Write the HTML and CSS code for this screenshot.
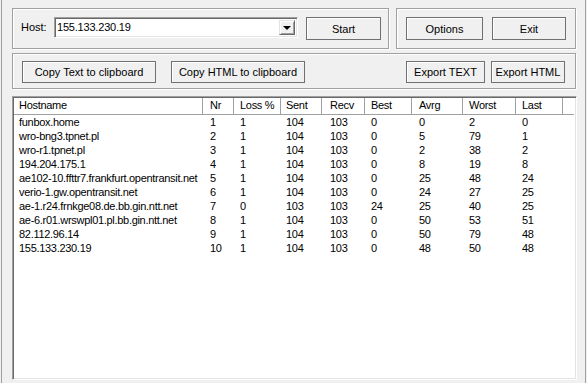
FILE: index.html
```html
<!DOCTYPE html>
<html lang="en">
<head>
<meta charset="UTF-8" />
<title>WinMTR</title>
<link rel="stylesheet" href="styles.css">
</head>
<body>
<div class="fila">
    <div class="grupo grupoHost">
        <span class="rotulo">Host:</span>
        <div class="combo">
            <span class="comboTexto">155.133.230.19</span>
            <span class="comboSeta"><i></i></span>
        </div>
        <div class="botao btnStart">Start</div>
    </div>
    <div class="grupo grupoOpcoes">
        <div class="botao btnOptions">Options</div>
        <div class="botao btnExit">Exit</div>
    </div>
</div>

<div class="grupo grupoCopiar">
    <div class="botao btnCopia">Copy Text to clipboard</div>
    <div class="botao btnCopia btnCopiaHtml">Copy HTML to clipboard</div>
    <div class="espaco"></div>
    <div class="botao btnExpTexto">Export TEXT</div>
    <div class="botao btnExpHtml">Export HTML</div>
</div>

<div class="lista">
    <div class="cabecalho">
        <div class="col c1">Hostname</div>
        <div class="col c2">Nr</div>
        <div class="col c3">Loss %</div>
        <div class="col c4">Sent</div>
        <div class="col c5">Recv</div>
        <div class="col c6">Best</div>
        <div class="col c7">Avrg</div>
        <div class="col c8">Worst</div>
        <div class="col c9">Last</div>
        <div class="col c10"></div>
    </div>
    <div id="linhas"></div>
</div>

<script>
    // dados do traceroute
    const dados = [
        ['funbox.home', 1, 1, 104, 103, 0, 0, 2, 0],
        ['wro-bng3.tpnet.pl', 2, 1, 104, 103, 0, 5, 79, 1],
        ['wro-r1.tpnet.pl', 3, 1, 104, 103, 0, 2, 38, 2],
        ['194.204.175.1', 4, 1, 104, 103, 0, 8, 19, 8],
        ['ae102-10.ffttr7.frankfurt.opentransit.net', 5, 1, 104, 103, 0, 25, 48, 24],
        ['verio-1.gw.opentransit.net', 6, 1, 104, 103, 0, 24, 27, 25],
        ['ae-1.r24.frnkge08.de.bb.gin.ntt.net', 7, 0, 103, 103, 24, 25, 40, 25],
        ['ae-6.r01.wrswpl01.pl.bb.gin.ntt.net', 8, 1, 104, 103, 0, 50, 53, 51],
        ['82.112.96.14', 9, 1, 104, 103, 0, 50, 79, 48],
        ['155.133.230.19', 10, 1, 104, 103, 0, 48, 50, 48]
    ];

    const linhas = document.getElementById('linhas');
    dados.forEach(function(d){
        const linha = document.createElement('div');
        linha.className = 'linha';
        d.forEach(function(v, i){
            const cel = document.createElement('div');
            cel.className = 'cel c' + (i + 1);
            cel.innerText = v;
            linha.appendChild(cel);
        });
        linhas.appendChild(linha);
    });
</script>
</body>
</html>
```

FILE: styles.css
```css
html{
    background-color: #f0f0f0;
}
body{
    margin: 0 0 0 1px;
    width: 583px;
    height: 383px;
    border-left: 1px solid #a0a0a0;
    border-right: 1px solid #a0a0a0;
    font-family: "Liberation Sans", Arial, sans-serif;
    font-size: 11px;
    color: #000;
    overflow: hidden;
}
.fila{
    display: flex;
    gap: 7px;
    margin: 8px 0 0 10px;
}
.grupo{
    box-sizing: border-box;
    border: 1px solid #a0a0a0;
    box-shadow: inset 1px 1px 0 #fff, 1px 1px 0 #fff;
    display: flex;
    align-items: flex-start;
}
.grupoHost{
    width: 377px;
    height: 41px;
    padding: 8px 0 0 8px;
}
.rotulo{
    margin-top: 4px;
    width: 33px;
}
.combo{
    box-sizing: border-box;
    width: 244px;
    height: 21px;
    background: #fff;
    border-top: 1px solid #a0a0a0;
    border-left: 1px solid #a0a0a0;
    border-right: 1px solid #fff;
    border-bottom: 1px solid #fff;
    box-shadow: inset 1px 1px 0 #696969, inset -1px -1px 0 #e3e3e3;
    display: flex;
    padding: 2px 2px 2px 2px;
}
.comboTexto{
    flex: 1;
    line-height: 15px;
    letter-spacing: -0.2px;
}
.comboSeta{
    box-sizing: border-box;
    width: 16px;
    height: 15px;
    background: #f0f0f0;
    border-top: 1px solid #e3e3e3;
    border-left: 1px solid #e3e3e3;
    border-right: 1px solid #696969;
    border-bottom: 1px solid #696969;
    box-shadow: inset 1px 1px 0 #fff, inset -1px -1px 0 #a0a0a0;
    display: flex;
    justify-content: center;
    align-items: center;
}
.comboSeta i{
    width: 0;
    height: 0;
    border-left: 4px solid transparent;
    border-right: 4px solid transparent;
    border-top: 4px solid #000;
    margin-top: 1px;
}
.botao{
    box-sizing: border-box;
    height: 23px;
    border: 1px solid #707070;
    box-shadow: inset 1px 1px 0 #fff;
    background: #f0f0f0;
    display: flex;
    justify-content: center;
    align-items: center;
    cursor: pointer;
    user-select: none;
}
.btnStart{
    width: 75px;
    margin-left: 8px;
}
.grupoOpcoes{
    width: 180px;
    height: 41px;
    padding: 8px 0 0 9px;
    gap: 9px;
}
.btnOptions{width: 77px;}
.btnExit{width: 74px;}

.grupoCopiar{
    width: 564px;
    height: 36px;
    margin: 4px 0 0 10px;
    padding: 7px 0 0 9px;
}
.grupoCopiar .botao{
    height: 22px;
}
.btnCopia{width: 134px;}
.btnCopiaHtml{margin-left: 15px;}
.espaco{flex: 1;}
.btnExpTexto{width: 79px;}
.btnExpHtml{width: 74px; margin: 0 10px 0 6px;}

.lista{
    box-sizing: border-box;
    width: 565px;
    height: 284px;
    margin: 7px 0 0 10px;
    background: #fff;
    border-top: 1px solid #a0a0a0;
    border-left: 1px solid #a0a0a0;
    border-right: 1px solid #fff;
    border-bottom: 1px solid #fff;
    box-shadow: inset 1px 1px 0 #696969, inset -1px -1px 0 #e3e3e3;
    padding: 1px;
    letter-spacing: -0.3px;
}
.cabecalho, .linha{
    display: flex;
    white-space: nowrap;
}
.cabecalho{
    height: 16px;
    border-bottom: 1px solid #a0a0a0;
    margin-right: 1px;
}
.col{
    box-sizing: border-box;
    line-height: 15px;
    padding-left: 5px;
    border-right: 1px solid #a0a0a0;
    flex: none;
}
.linha{
    height: 14px;
    line-height: 14px;
}
.cel{
    box-sizing: border-box;
    padding-left: 5px;
    flex: none;
    overflow: hidden;
}
.c1{width: 189px;}
.c2{width: 31px; padding-left: 7px;}
.c3{width: 47px; padding-left: 6px;}
.c4{width: 41px;}
.c5{width: 43px; padding-left: 8px;}
.c6{width: 47px; padding-left: 6px;}
.c7{width: 51px; padding-left: 7px;}
.c8{width: 53px; padding-left: 6px;}
.c9{width: 47px; padding-left: 6px;}
.c10{flex: 1; border-right: none;}
```
